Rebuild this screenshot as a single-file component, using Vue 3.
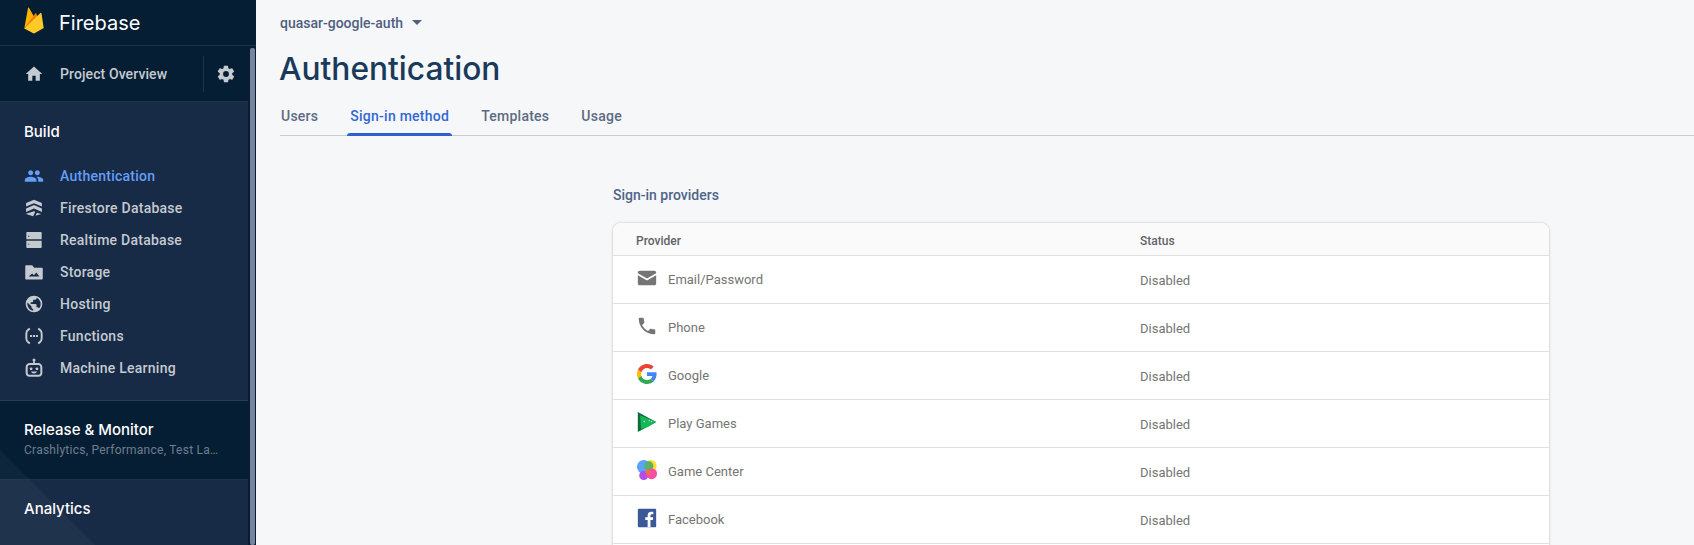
<template>
  <div class="page">
    <aside class="sidebar">
      <div class="brand">
        <svg class="flame" viewBox="24 7 20 27" width="20" height="27">
          <path d="M24.300 28.500 28 8c.1-.6.7-.7 1-.2l5 9z" fill="#ffb300" />
          <path d="M24.300 28.500 35.300 13.400c.3-.4.7-.4.9 0l2.800 6.600z" fill="#f57c00" />
          <path d="M24.300 28.500 40.400 13c.4-.4 1-.2 1.100.4L43.700 28l-8.700 5.100c-.7.4-1.500.4-2.200 0z" fill="#ffca28" />
        </svg>
        <span class="brand-name">Firebase</span>
      </div>
      <div class="overview">
        <svg class="icon" viewBox="0 0 24 24"><path d="M10 20v-6h4v6h5v-8h3L12 3 2 12h3v8z" /></svg>
        <span class="overview-label">Project Overview</span>
        <div class="overview-gear">
          <svg viewBox="0 0 24 24" width="20" height="20"><path d="M19.400 13c.1-.3.100-.7.100-1s0-.7-.1-1l2.100-1.600c.2-.2.200-.4.100-.6l-2-3.500c-.1-.2-.4-.3-.6-.2l-2.500 1c-.5-.4-1.100-.7-1.700-1l-.4-2.700c0-.2-.2-.4-.5-.4h-4c-.2 0-.5.200-.5.400l-.4 2.700c-.6.300-1.200.6-1.700 1l-2.500-1c-.2-.1-.5 0-.6.200l-2 3.500c-.1.200-.1.400.1.600L4.500 11c0 .3-.1.700-.1 1s0 .7.100 1l-2.100 1.600c-.2.200-.2.400-.1.600l2 3.500c.1.200.4.300.6.200l2.500-1c.5.400 1.100.7 1.700 1l.4 2.700c0 .2.300.4.500.4h4c.3 0 .5-.2.500-.4l.4-2.700c.6-.3 1.200-.6 1.700-1l2.500 1c.2.100.5 0 .6-.2l2-3.500c.1-.2.100-.4-.1-.6zM12 15.500a3.500 3.500 0 1 1 0-7 3.500 3.500 0 0 1 0 7z" /></svg>
        </div>
      </div>

      <section class="build">
        <h2 class="group-title">Build</h2>
        <ul class="nav">
          <li v-for="item in navItems" :key="item.label" class="nav-item" :class="{ active: item.active }">
            <svg class="icon" viewBox="0 0 24 24" v-html="item.icon"></svg>
            <span>{{ item.label }}</span>
          </li>
        </ul>
      </section>

      <section class="release">
        <div class="group-title">Release &amp; Monitor</div>
        <div class="release-sub">Crashlytics, Performance, Test La…</div>
      </section>

      <section class="analytics">
        <div class="group-title">Analytics</div>
      </section>

      <svg class="sidebar-shape" viewBox="0 0 100 100"><path d="M0 0 100 100H0z" /></svg>
      <div class="scrollbar"></div>
    </aside>

    <main class="content">
      <div class="project">
        <span>quasar-google-auth</span>
        <i class="caret"></i>
      </div>
      <h1 class="title">Authentication</h1>
      <nav class="tabs">
        <a v-for="tab in tabs" :key="tab" class="tab" :class="{ current: tab === 'Sign-in method' }">{{ tab }}</a>
      </nav>

      <div class="providers">
        <h3 class="providers-title">Sign-in providers</h3>
        <div class="card">
          <div class="row head">
            <span class="col-provider">Provider</span>
            <span>Status</span>
          </div>
          <div v-for="p in providers" :key="p.name" class="row">
            <div class="col-provider cell">
              <svg class="provider-icon" viewBox="0 0 24 24" v-html="p.icon"></svg>
              <span class="provider-name">{{ p.name }}</span>
            </div>
            <span class="status">Disabled</span>
          </div>
          <div class="row"></div>
        </div>
      </div>
    </main>
  </div>
</template>

<script setup>
const tabs = ['Users', 'Sign-in method', 'Templates', 'Usage']

const navItems = [
  {
    label: 'Authentication',
    active: true,
    icon: '<path d="M16 11c1.660 0 3-1.340 3-3s-1.340-3-3-3-3 1.340-3 3 1.340 3 3 3zm-8 0c1.660 0 3-1.340 3-3S9.660 5 8 5 5 6.340 5 8s1.340 3 3 3zm0 2c-2.330 0-7 1.170-7 3.500V19h14v-2.500C15 14.170 10.330 13 8 13zm8 0c-.3 0-.6 0-1 .1 1.200.8 2 2 2 3.400V19h6v-2.500c0-2.330-4.670-3.500-7-3.500z"/>'
  },
  {
    label: 'Firestore Database',
    icon: '<path d="M12 2 2.500 6v4.200L12 6.200l9.500 4V6z"/><path d="M12 8.500 2.500 12.500v4.200L12 12.700l9.500 4v-4.200z"/><path d="M2.500 18.800v.3l8.500 2.700 2.500-5.200-1.500-.6zM15.500 17.800l-1.800 3.500 7-2.200z"/>'
  },
  {
    label: 'Realtime Database',
    icon: '<path fill-rule="evenodd" d="M4 2.500h16c.7 0 1.200.5 1.200 1.200v7.500H2.800V3.700c0-.7.5-1.200 1.200-1.200zM5 7v1h1.500V7zM2.800 12.800h18.400v7.500c0 .7-.5 1.200-1.200 1.200H4c-.7 0-1.200-.5-1.200-1.200zM5 16.500v1h1.500v-1z"/>'
  },
  {
    label: 'Storage',
    icon: '<path fill-rule="evenodd" d="M1.500 5c0-.6.4-1 1-1h7.300l2.400 2.800h9.300c.6 0 1 .4 1 1V20c0 .6-.4 1-1 1h-19c-.6 0-1-.4-1-1zM5.500 17.500h13l-3.800-4.800-2.700 3.200-2.200-2z"/>'
  },
  {
    label: 'Hosting',
    icon: '<path d="M12 2a10 10 0 1 0 0 20 10 10 0 0 0 0-20zM4 12c0-.6.1-1.200.2-1.800L9 15v1c0 1.100.9 2 2 2v2a8 8 0 0 1-7-8zm13.900 5.400c-.3-.8-1-1.400-1.900-1.400h-1v-3c0-.6-.4-1-1-1H8v-2h2c.6 0 1-.4 1-1V7h2c1.100 0 2-.9 2-2v-.4a8 8 0 0 1 2.900 12.800z"/>'
  },
  {
    label: 'Functions',
    icon: '<path fill="none" stroke="currentColor" stroke-width="2.300" d="M7 3.200 5.200 4.300C3.600 5.300 2.800 7 2.800 9v6c0 2 .8 3.700 2.400 4.700L7 20.800M17 3.200l1.800 1.100c1.600 1 2.400 2.700 2.400 4.700v6c0 2-.8 3.700-2.400 4.700L17 20.800"/><rect x="7.300" y="10.800" width="2.400" height="2.400"/><rect x="10.800" y="10.800" width="2.400" height="2.400"/><rect x="14.300" y="10.800" width="2.400" height="2.400"/>'
  },
  {
    label: 'Machine Learning',
    icon: '<circle cx="12" cy="2.500" r="1.800"/><rect x="11" y="3" width="2" height="4"/><path fill-rule="evenodd" d="M7 6h10c2.800 0 5 2.200 5 5v7c0 2.500-2 4.500-4.500 4.500h-11C4 22.500 2 20.500 2 18v-7c0-2.800 2.200-5 5-5zm0 2.400c-1.500 0-2.600 1.100-2.600 2.600v7c0 1.100.9 2.100 2.100 2.100h11c1.200 0 2.100-1 2.100-2.100v-7c0-1.500-1.100-2.600-2.600-2.600z"/><circle cx="8.500" cy="13" r="1.700"/><circle cx="15.500" cy="13" r="1.700"/><path d="M8.500 16.200h7c-.3 1.400-1.700 2.400-3.500 2.400s-3.200-1-3.500-2.400z"/>'
  }
]

const providers = [
  {
    name: 'Email/Password',
    icon: '<path fill="#757575" d="M4 4h16c1.100 0 2 .9 2 2v.7l-10 5.800L2 6.700V6c0-1.100.9-2 2-2zM2 9l10 5.800L22 9v9c0 1.100-.9 2-2 2H4c-1.100 0-2-.9-2-2z"/>'
  },
  {
    name: 'Phone',
    icon: '<path fill="#757575" d="M6.600 10.800c1.400 2.800 3.800 5.100 6.600 6.600l2.200-2.200c.3-.3.700-.4 1-.2 1.100.4 2.300.6 3.600.6.600 0 1 .4 1 1V20c0 .6-.4 1-1 1C10.600 21 3 13.400 3 4c0-.6.400-1 1-1h3.500c.6 0 1 .4 1 1 0 1.300.2 2.500.6 3.600.1.300 0 .7-.2 1z"/>'
  },
  {
    name: 'Google',
    icon: '<g transform="translate(1.100 1.100) scale(.908)"><path fill="#4285f4" d="M23.500 12.300c0-.9-.1-1.700-.2-2.500H12v4.700h6.500c-.3 1.500-1.100 2.800-2.400 3.600l3.700 2.900c2.300-2.100 3.700-5.200 3.700-8.700z"/><path fill="#34a853" d="M12 24c3.200 0 5.900-1.100 7.900-2.900l-3.800-3c-1.100.7-2.500 1.200-4.100 1.200-3.100 0-5.800-2.100-6.700-5H1.300v3.100C3.300 21.300 7.300 24 12 24z"/><path fill="#fbbc05" d="M5.300 14.300c-.5-1.500-.5-3.100 0-4.600V6.600h-4a12 12 0 0 0 0 10.800z"/><path fill="#ea4335" d="M12 4.800c1.800 0 3.300.6 4.600 1.800L20 3.200C17.900 1.200 15.200 0 12 0 7.300 0 3.300 2.700 1.300 6.600l4 3.100c.9-2.800 3.600-4.900 6.700-4.900z"/></g>'
  },
  {
    name: 'Play Games',
    icon: '<path fill="#0a6e36" d="M2 1 22 12 2 23z"/><path fill="#17b85a" d="M4.500 4.500 22 12l-9 5.500-7.500 2z"/><circle cx="9" cy="11.500" r=".9" fill="#a5efc4"/><circle cx="14.500" cy="10.500" r=".8" fill="#a5efc4"/><circle cx="17" cy="11.500" r=".8" fill="#a5efc4"/>'
  },
  {
    name: 'Game Center',
    icon: '<circle cx="16" cy="7.500" r="6.500" fill="#ffdf2c"/><circle cx="8.500" cy="8.500" r="7.500" fill="#5aa3f8"/><circle cx="14" cy="7.500" r="5" fill="#58b368"/><circle cx="8.500" cy="18" r="5" fill="#b14de8"/><circle cx="17" cy="16" r="6" fill="#f84fa0"/><circle cx="13" cy="14" r="2.800" fill="#e8754a"/>'
  },
  {
    name: 'Facebook',
    icon: '<rect x="2" y="2" width="20" height="20" rx="1" fill="#3b5998"/><path fill="#fff" d="M15.800 22v-7.700h2.600l.4-3h-3V9.400c0-.9.2-1.500 1.500-1.500h1.600V5.200c-.3 0-1.200-.1-2.300-.1-2.300 0-3.900 1.400-3.900 4v2.200h-2.600v3h2.600V22z"/>'
  }
]
</script>

<style>
html,
body {
  margin: 0;
  overflow: hidden;
  background: #f6f7f9;
}
</style>

<style scoped>
.page {
  display: flex;
  width: 1694px;
  height: 545px;
  overflow: hidden;
  font-family: Roboto, "Liberation Sans", sans-serif;
}

/* sidebar */
.sidebar {
  position: relative;
  flex: 0 0 256px;
  height: 545px;
  overflow: hidden;
  background: #172b46;
}

.brand {
  display: flex;
  align-items: center;
  height: 45px;
  padding-left: 24px;
  background: #051e34;
  border-bottom: 1px solid #1e3248;
}

.flame {
  flex: none;
  margin-top: -4px;
}

.brand-name {
  margin-left: 15px;
  font-family: Inter, Roboto, sans-serif;
  font-size: 20px;
  color: #fff;
}

.overview {
  display: flex;
  align-items: center;
  height: 55px;
  padding-left: 24px;
  background: #051e34;
  border-bottom: 1px solid #1e3248;
  color: #c5cad1;
}

.icon {
  flex: none;
  width: 20px;
  height: 20px;
  margin-right: 16px;
  fill: currentColor;
  color: #c5cad1;
}

.overview-label {
  font-size: 14px;
  font-weight: 500;
  letter-spacing: 0.1px;
  color: #c5cad1;
}

.overview-gear {
  display: flex;
  align-items: center;
  justify-content: center;
  width: 44px;
  height: 36px;
  margin-left: auto;
  margin-right: 8px;
  border-left: 1px solid #1e3248;
  fill: #c5cad1;
}

.build {
  padding-top: 21px;
}

.group-title {
  margin: 0;
  font-family: Inter, Roboto, sans-serif;
  font-size: 15px;
  font-weight: 500;
  line-height: 18px;
  color: #fff;
}

.build .group-title {
  padding-left: 24px;
}

.nav {
  margin: 19px 0 0;
  padding: 0 0 0 24px;
  list-style: none;
}

.nav-item {
  display: flex;
  align-items: center;
  height: 32px;
  font-size: 14px;
  font-weight: 500;
  letter-spacing: 0.25px;
  color: #c5cad1;
}

.nav-item.active {
  color: #669df6;
}

.nav-item.active .icon {
  color: #669df6;
}

.release {
  position: relative;
  height: 80px;
  margin-top: 16px;
  padding: 20px 0 0 24px;
  box-sizing: border-box;
  background: #051e34;
  border-top: 1px solid #2a3e58;
  border-bottom: 1px solid #1e3248;
}

.release-sub {
  margin-top: 3px;
  font-size: 12px;
  line-height: 16px;
  letter-spacing: 0.25px;
  color: #6f7e90;
}

.analytics {
  position: relative;
  padding: 20px 0 0 24px;
}

.sidebar-shape {
  position: absolute;
  left: 0;
  top: 450px;
  width: 100px;
  height: 100px;
  fill: #fff;
  opacity: 0.035;
  pointer-events: none;
}

.scrollbar {
  position: absolute;
  top: 46px;
  right: 0;
  bottom: 0;
  width: 8px;
  background: #051e34;
}

.scrollbar::after {
  content: "";
  position: absolute;
  top: 2px;
  bottom: 0;
  left: 2px;
  width: 5px;
  border-radius: 2px;
  background: #78849c;
}

/* main */
.content {
  flex: 1;
  min-width: 0;
  padding: 0 0 0 24px;
  background: #f6f7f9;
}

.project {
  display: flex;
  align-items: center;
  height: 45px;
  font-size: 14px;
  font-weight: 500;
  color: #4f6080;
}

.caret {
  margin-left: 9px;
  border-left: 5px solid transparent;
  border-right: 5px solid transparent;
  border-top: 5px solid #4f6080;
}

.title {
  margin: 0 0 0 -1px;
  font-family: Inter, Roboto, sans-serif;
  font-size: 31.700px;
  font-weight: 500;
  line-height: 48px;
  color: #1a3a5c;
}

.tabs {
  display: flex;
  gap: 24px;
  height: 38px;
  margin-top: 4px;
  border-bottom: 1px solid #c5ccd9;
}

.tab {
  display: flex;
  align-items: center;
  position: relative;
  padding: 0 4px;
  font-size: 14px;
  font-weight: 500;
  letter-spacing: 0.25px;
  color: #5c6b82;
}

.tab:first-child {
  margin-left: -3px;
}

.tab.current {
  color: #3367d6;
}

.tab.current::after {
  content: "";
  position: absolute;
  left: 1px;
  right: 1px;
  bottom: -1px;
  height: 3px;
  border-radius: 3px 3px 0 0;
  background: #2f5fd0;
}

.providers {
  width: 936px;
  margin: 49px 0 0 333px;
}

.providers-title {
  margin: 0;
  font-size: 14px;
  font-weight: 500;
  line-height: 20px;
  color: #4f6488;
}

.card {
  margin-top: 18px;
  border-radius: 8px 8px 0 0;
  background: #fff;
  box-shadow: 0 0 2px rgba(60, 64, 67, 0.3), 0 1px 3px rgba(60, 64, 67, 0.15);
}

.row {
  display: flex;
  align-items: center;
  height: 48px;
  box-sizing: border-box;
  padding-left: 23px;
  border-bottom: 1px solid #e0e0e0;
  font-size: 13px;
  color: #757575;
}

.row.head {
  height: 33px;
  padding-top: 4px;
  border-radius: 8px 8px 0 0;
  background: #fafafa;
  font-size: 12px;
  font-weight: 500;
  color: #5f6368;
}

.col-provider {
  flex: 0 0 504px;
}

.cell {
  display: flex;
  align-items: center;
  align-self: stretch;
}

.provider-icon {
  flex: none;
  align-self: flex-start;
  width: 22px;
  height: 22px;
  margin-top: 11px;
  margin-right: 10px;
}

.provider-name {
  font-size: 13px;
  color: #757575;
}

.status {
  margin-top: 2px;
  font-size: 13px;
  color: #757575;
}
</style>
